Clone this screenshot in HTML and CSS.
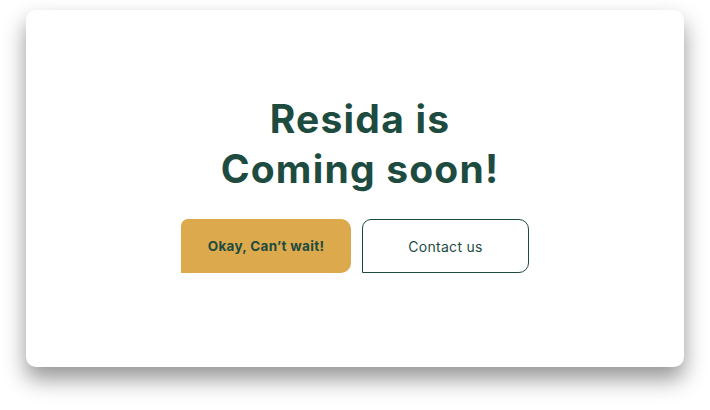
FILE: index.html
```html
<!DOCTYPE html>
<html lang="en">
<head>
<meta charset="utf-8">
<title>Resida is Coming soon!</title>
<link rel="stylesheet" href="styles.css">
</head>
<body>
<main class="card">
  <h1 class="title">Resida is<br>Coming soon!</h1>
  <div class="actions">
    <button class="btn btn-primary" type="button">Okay, Can’t wait!</button>
    <button class="btn btn-outline" type="button">Contact us</button>
  </div>
</main>
</body>
</html>
```
FILE: styles.css
```css
* { box-sizing: border-box; }
html, body { margin: 0; padding: 0; background: #ffffff; }
body {
  min-height: 410px;
  padding: 10px 26px 0;
  font-family: "Inter", "Noto Sans", "Liberation Sans", sans-serif;
}
.card {
  height: 357px;
  background: #ffffff;
  border-radius: 10px;
  box-shadow: 0 12px 22px rgba(0, 0, 0, 0.42);
  display: flex;
  flex-direction: column;
  align-items: center;
  padding-top: 84px;
}
.title {
  margin: 0;
  padding-left: 10px;
  text-align: center;
  color: #1e4b3f;
  font-size: 39px;
  font-weight: 700;
  line-height: 50px;
  letter-spacing: 1.2px;
}
.actions {
  display: flex;
  gap: 11px;
  margin-top: 25px;
}
.btn {
  height: 54px;
  font-family: inherit;
  font-size: 14px;
  color: #1e4b3f;
  letter-spacing: 0.3px;
  cursor: pointer;
}
.btn-primary {
  width: 170px;
  background: #dca94d;
  border: none;
  border-radius: 7px 10px 10px 0;
  font-weight: 700;
  font-size: 13.5px;
}
.btn-outline {
  width: 167px;
  background: #ffffff;
  border: 1px solid #1e4b3f;
  border-radius: 9px 10px 10px 0;
  font-weight: 400;
}
```
